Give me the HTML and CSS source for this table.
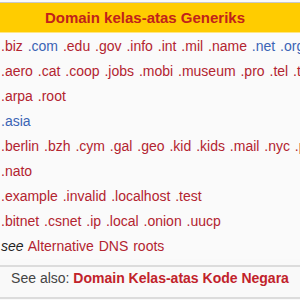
FILE: index.html
```html
<!DOCTYPE html>
<html lang="id">
<head>
<meta charset="utf-8">
<title>Domain kelas-atas Generiks</title>
<link rel="stylesheet" href="styles.css">
</head>
<body>
<div class="navbox">
  <div class="navbox-title"><a class="title-link" href="#">Domain kelas-atas Generiks</a></div>
  <div class="navbox-list">
    <div class="row"><a href="#">.biz</a> <a class="blue" href="#">.com</a> <a href="#">.edu</a> <a href="#">.gov</a> <a href="#">.info</a> <a href="#">.int</a> <a href="#">.mil</a> <a href="#">.name</a> <a class="blue" href="#">.net</a> <a class="blue" href="#">.org</a></div>
    <div class="row"><a href="#">.aero</a> <a href="#">.cat</a> <a href="#">.coop</a> <a href="#">.jobs</a> <a href="#">.mobi</a> <a href="#">.museum</a> <a href="#">.pro</a> <a href="#">.tel</a> <a href="#">.travel</a></div>
    <div class="row"><a href="#">.arpa</a> <a href="#">.root</a></div>
    <div class="row"><a class="blue" href="#">.asia</a></div>
    <div class="row"><a href="#">.berlin</a> <a href="#">.bzh</a> <a href="#">.cym</a> <a href="#">.gal</a> <a href="#">.geo</a> <a href="#">.kid</a> <a href="#">.kids</a> <a href="#">.mail</a> <a href="#">.nyc</a> <a href="#">.post</a></div>
    <div class="row"><a href="#">.nato</a></div>
    <div class="row"><a href="#">.example</a> <a href="#">.invalid</a> <a href="#">.localhost</a> <a href="#">.test</a></div>
    <div class="row"><a href="#">.bitnet</a> <a href="#">.csnet</a> <a href="#">.ip</a> <a href="#">.local</a> <a href="#">.onion</a> <a href="#">.uucp</a></div>
    <div class="row"><i>see</i> <a href="#">Alternative DNS roots</a></div>
  </div>
  <div class="navbox-below">See also: <a class="strong" href="#">Domain Kelas-atas Kode Negara</a></div>
</div>
</body>
</html>
```

FILE: styles.css
```css
html, body {
  margin: 0;
  padding: 0;
}

body {
  width: 300px;
  height: 300px;
  overflow: hidden;
  background: #f9f9f9;
  font-family: "Liberation Sans", Arial, sans-serif;
  font-size: 14px;
  color: #222;
}

a {
  color: #b32430;
  text-decoration: none;
}

a.blue {
  color: #3b64b5;
}

.navbox {
  margin-top: 2px;
  border-top: 1px solid #c8c8c8;
}

.navbox-title {
  height: 29px;
  background: #ffcc00;
  border-bottom: 1px solid #ffe680;
  display: flex;
  align-items: center;
  justify-content: center;
  padding-right: 10px;
}

.title-link {
  font-weight: bold;
  font-size: 15px;
  color: #c1221b;
}

.navbox-list {
  background: #fafafa;
  padding-top: 1px;
}

.row {
  height: 25px;
  line-height: 25px;
  white-space: nowrap;
  margin-left: 1px;
  word-spacing: 1px;
}

.row i {
  font-style: italic;
  color: #222;
}

.navbox-below {
  margin-top: 6px;
  border-top: 2px solid #dcdcdc;
  line-height: 23px;
  padding-bottom: 7px;
  text-align: center;
  color: #444;
  background: #f9f9f9;
  border-bottom: 2px solid #dcdcdc;
}

.strong {
  font-weight: bold;
  color: #c1222a;
}
```
